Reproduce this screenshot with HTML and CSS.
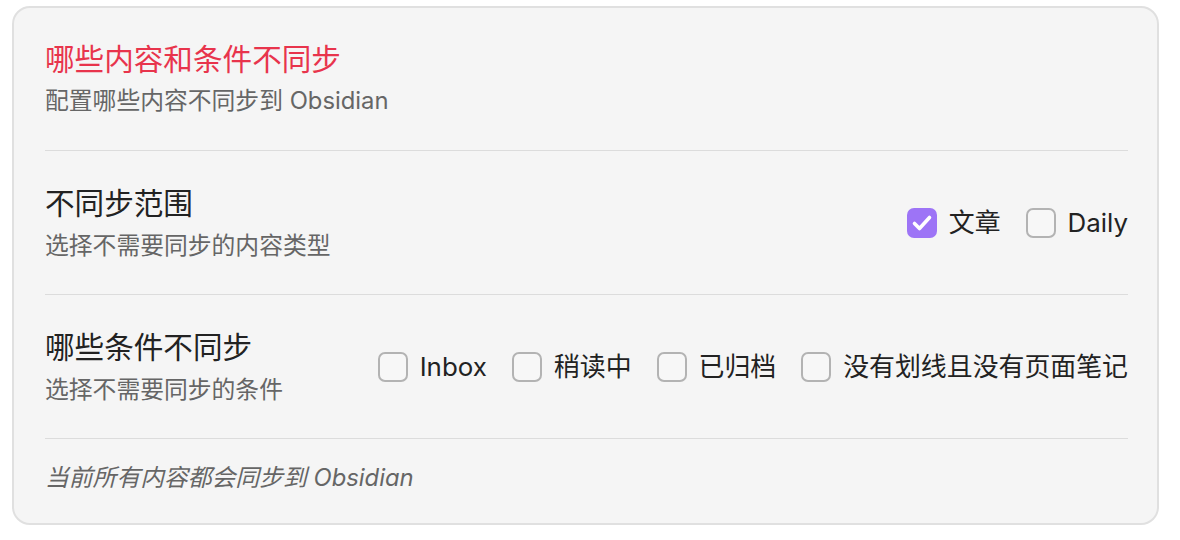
FILE: index.html
```html
<!DOCTYPE html>
<html lang="zh-CN">
<head>
<meta charset="utf-8">
<title>不同步设置</title>
<link rel="stylesheet" href="styles.css">
</head>
<body>
<div class="card">
  <header class="head">
    <h1 class="title">哪些内容和条件不同步</h1>
    <p class="desc">配置哪些内容不同步到 Obsidian</p>
  </header>

  <section class="row">
    <div class="info">
      <div class="label">不同步范围</div>
      <div class="desc">选择不需要同步的内容类型</div>
    </div>
    <div class="options">
      <label class="opt">
        <span class="box checked">
          <svg viewBox="0 0 30 30" width="30" height="30"><path d="M7.5 15.5 L12.5 20.5 L22.5 9.5" fill="none" stroke="#fff" stroke-width="3.6" stroke-linecap="round" stroke-linejoin="round"/></svg>
        </span>
        <span class="opt-text">文章</span>
      </label>
      <label class="opt">
        <span class="box"></span>
        <span class="opt-text">Daily</span>
      </label>
    </div>
  </section>

  <section class="row">
    <div class="info">
      <div class="label">哪些条件不同步</div>
      <div class="desc">选择不需要同步的条件</div>
    </div>
    <div class="options">
      <label class="opt"><span class="box"></span><span class="opt-text">Inbox</span></label>
      <label class="opt"><span class="box"></span><span class="opt-text">稍读中</span></label>
      <label class="opt"><span class="box"></span><span class="opt-text">已归档</span></label>
      <label class="opt"><span class="box"></span><span class="opt-text">没有划线且没有页面笔记</span></label>
    </div>
  </section>

  <footer class="foot">当前所有内容都会同步到 Obsidian</footer>
</div>
</body>
</html>
```

FILE: styles.css
```css
* { box-sizing: border-box; }

html, body {
  margin: 0;
  padding: 0;
  background: #ffffff;
}

body {
  padding: 6px 21px 0 12px;
  font-family: Inter, "Noto Sans CJK SC", sans-serif;
  color: #222222;
}

.card {
  background: #f5f5f5;
  border: 2px solid #e0e0e0;
  border-radius: 18px;
  padding: 0 29px 0 31px;
  height: 519px;
}

.head {
  padding: 31px 0 32px;
}

.title {
  margin: 0;
  font-size: 29.6px;
  line-height: 40px;
  font-weight: 400;
  color: #e8344c;
}

.desc {
  margin: 0;
  font-size: 23.8px;
  line-height: 34px;
  color: #666666;
}

.head .desc {
  margin-top: 5px;
}

.row {
  border-top: 1px solid #dcdcdc;
  padding: 32px 0 31px;
  display: flex;
  align-items: center;
  justify-content: space-between;
}

.label {
  font-size: 29.6px;
  line-height: 40px;
  color: #222222;
}

.info .desc {
  margin-top: 6px;
}

.options {
  display: flex;
  align-items: center;
  gap: 25px;
}

.opt {
  display: flex;
  align-items: center;
  gap: 12px;
}

.box {
  width: 30px;
  height: 30px;
  border: 2px solid #b3b3b3;
  border-radius: 7px;
  background: #f7f7f7;
  display: block;
}

.box.checked {
  border: none;
  background: #9d74f6;
}

.box svg {
  display: block;
}

.opt-text {
  font-size: 25.9px;
  line-height: 34px;
  color: #222222;
}

.foot {
  border-top: 1px solid #dcdcdc;
  padding-top: 22px;
  font-size: 23.8px;
  line-height: 34px;
  font-style: italic;
  color: #666666;
}
```
